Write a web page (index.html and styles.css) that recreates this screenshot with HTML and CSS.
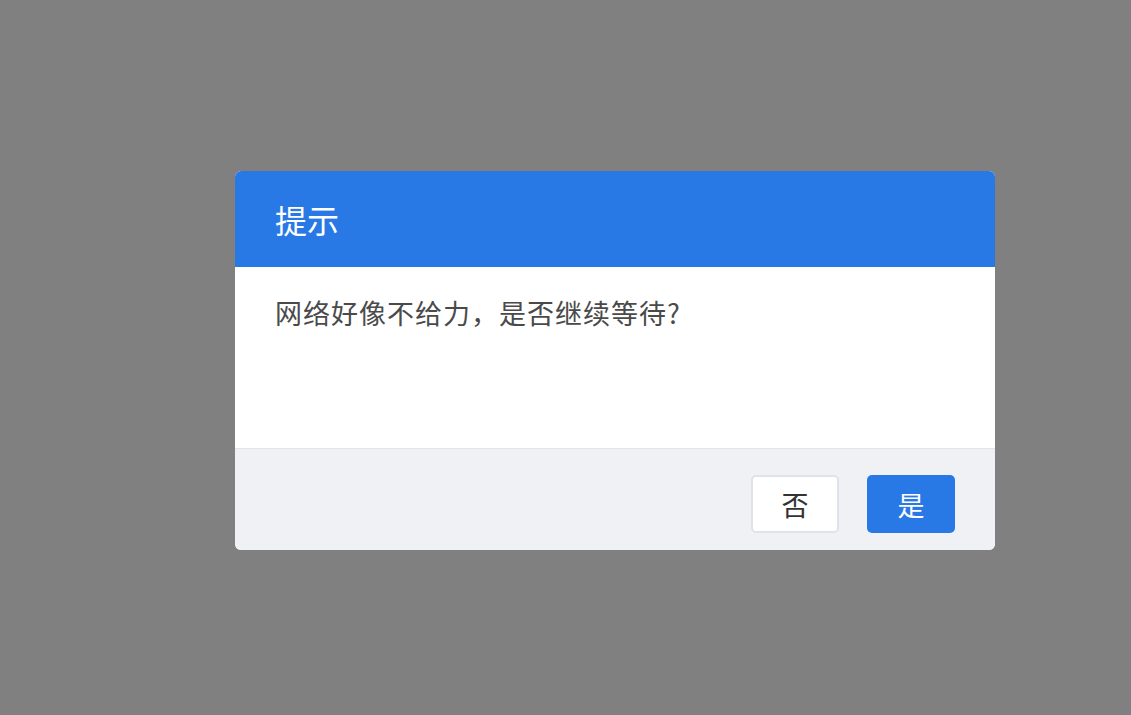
FILE: index.html
```html
<!DOCTYPE html>
<html lang="zh-CN">
<head>
<meta charset="utf-8">
<title>提示</title>
<link rel="stylesheet" href="styles.css">
</head>
<body>
<div class="overlay">
  <div class="dialog">
    <div class="dialog-header">提示</div>
    <div class="dialog-body">网络好像不给力，是否继续等待?</div>
    <div class="dialog-footer">
      <button class="btn btn-default">否</button>
      <button class="btn btn-primary">是</button>
    </div>
  </div>
</div>
</body>
</html>
```
FILE: styles.css
```css
html, body {
  margin: 0;
  padding: 0;
  height: 100%;
}
body {
  background: #808080;
  font-family: "Noto Sans CJK SC", "Noto Sans", sans-serif;
}
.overlay {
  box-sizing: border-box;
  height: 100vh;
  padding: 171px 0 0 235px;
}
.dialog {
  width: 760px;
  background: #fff;
  border-radius: 6px;
  overflow: hidden;
}
.dialog-header {
  box-sizing: border-box;
  height: 96px;
  padding: 0 40px;
  display: flex;
  align-items: center;
  background: #2878e5;
  color: #fff;
  font-size: 32px;
  line-height: 32px;
}
.dialog-body {
  box-sizing: border-box;
  height: 182px;
  padding: 31px 40px 0;
  font-size: 27px;
  line-height: 30px;
  letter-spacing: 1px;
  color: #4a4a4a;
  border-bottom: 1px solid #e1e4ea;
}
.dialog-footer {
  box-sizing: border-box;
  height: 101px;
  padding: 26px 40px 0;
  background: #f0f1f5;
  display: flex;
  justify-content: flex-end;
  align-items: flex-start;
  gap: 28px;
}
.btn {
  box-sizing: border-box;
  width: 88px;
  height: 58px;
  border-radius: 5px;
  font-family: inherit;
  font-size: 27px;
  line-height: 27px;
  padding: 0;
  cursor: pointer;
}
.btn-default {
  background: #fff;
  color: #333;
  border: 2px solid #dfe2e8;
}
.btn-primary {
  background: #2878e5;
  color: #fff;
  border: none;
}
```
